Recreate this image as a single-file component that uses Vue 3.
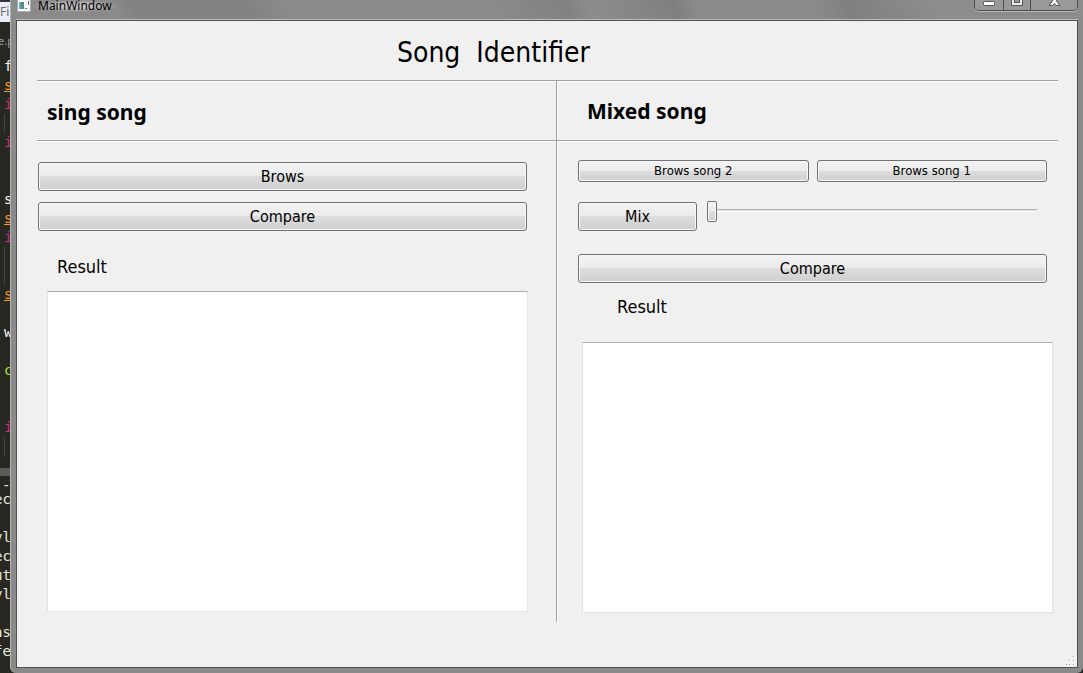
<script setup>
import { ref } from 'vue'

const topCode = [
  { t: 'f', c: 'white' }, { t: 's', c: 'orange' }, { t: 'i', c: 'pink' }, { t: '', c: 'guide' },
  { t: 'i', c: 'pink' }, { t: '' }, { t: '' }, { t: 's', c: 'white' },
  { t: 's', c: 'orange' }, { t: 'i', c: 'pink' }, { t: '', c: 'guide' }, { t: '', c: 'guide' },
  { t: 's', c: 'orange' }, { t: '' }, { t: 'w', c: 'white' }, { t: '' },
  { t: 'c', c: 'green' }, { t: '' }, { t: '' }, { t: 'i', c: 'pink' }, { t: '', c: 'guide' }
]
const bottomCode = ['ec', '', 'yl', 'ec', 'ut', 'yl', '', 'as', 'fe']

const heading = 'Song  Identifier'
const position = ref(0)
const leftResult = ref('')
const rightResult = ref('')
</script>

<template>
  <div class="screen">
    <aside class="editor">
      <div class="menu">Fi</div>
      <div class="tab">e.p</div>
      <div class="code">
        <div v-for="(l, n) in topCode" :key="n" class="line" :class="l.c">{{ l.t }}</div>
      </div>
      <div class="scroll"></div>
      <div class="console">
        <div class="line dash">-</div>
        <div v-for="(l, n) in bottomCode" :key="n" class="line">{{ l }}</div>
      </div>
    </aside>

    <div class="window">
      <header class="titlebar">
        <svg class="app-icon" width="14" height="12" viewBox="0 0 14 12">
          <rect x="0.5" y="-2" width="13" height="13.5" fill="#fafafa" stroke="#a9adb0" />
          <rect x="2" y="2" width="5" height="7" fill="#4f9185" />
          <rect x="2" y="2" width="2" height="7" fill="#71a5bb" />
          <rect x="8" y="8" width="2" height="1" fill="#777" />
          <rect x="11" y="1" width="1" height="4" fill="#60646c" />
        </svg>
        <span class="caption">MainWindow</span>
        <div class="controls">
          <button class="min" aria-label="Minimize">
            <svg width="14" height="8" viewBox="0 0 14 8"><rect x="1.5" y="1.5" width="11" height="4" rx="1" fill="#fff" stroke="#555" /></svg>
          </button>
          <button class="max" aria-label="Maximize">
            <svg width="14" height="8" viewBox="0 0 14 8"><path d="M1.5 -3V5.5H12.5V-3" fill="#eee" stroke="#555" /><rect x="4.5" y="-2" width="5" height="4.5" fill="#999" stroke="#555" /></svg>
          </button>
          <button class="close" aria-label="Close">
            <svg width="14" height="8" viewBox="0 0 14 8"><path d="M4 -3L5.5 1L2 5.5H5.5L7.5 3.5L9.5 5.5H13L9.5 1L11 -3Z" fill="#f5f5f5" stroke="#555" /></svg>
          </button>
        </div>
      </header>

      <main class="client">
        <h1>{{ heading }}</h1>
        <div class="panels">
          <section class="single">
            <h2>sing song</h2>
            <div class="single-body">
              <button class="btn">Brows</button>
              <button class="btn">Compare</button>
              <label for="result-single">Result</label>
              <textarea id="result-single" v-model="leftResult"></textarea>
            </div>
          </section>
          <section class="mixed">
            <h2>Mixed song</h2>
            <div class="mixed-body">
              <div class="pair">
                <button class="btn small">Brows song 2</button>
                <button class="btn small">Brows song 1</button>
              </div>
              <div class="mix-row">
                <button class="btn mix">Mix</button>
                <input v-model="position" type="range" min="0" max="99" aria-label="Mix position">
              </div>
              <button class="btn">Compare</button>
              <label for="result-mixed">Result</label>
              <textarea id="result-mixed" v-model="rightResult"></textarea>
            </div>
          </section>
        </div>
        <svg class="grip" width="10" height="10" viewBox="0 0 10 10">
          <path d="M7 0h2v2h-2zM7 4h2v2h-2zM7 8h2v2h-2zM3 4h2v2h-2zM3 8h2v2h-2zM-1 8h2v2h-2z" fill="#fff" />
          <path d="M7 0h1v1h-1zM7 4h1v1h-1zM7 8h1v1h-1zM3 4h1v1h-1zM3 8h1v1h-1zM0 8h1v1h-1z" fill="#999" />
        </svg>
      </main>
    </div>
  </div>
</template>

<style>
body { margin: 0; background: #272822; }
</style>

<style scoped>
* { box-sizing: border-box; }
.screen {
  display: flex;
  height: 100vh;
  overflow: hidden;
  background: #272822;
  color: #000;
  font-family: "DejaVu Sans Condensed", "Noto Sans", sans-serif;
}
.editor {
  width: 10px;
  flex: none;
  overflow: hidden;
  white-space: nowrap;
  font: 14px/19px "DejaVu Sans Mono", monospace;
  color: #e8e8e2;
}
.menu {
  height: 22px;
  background: #e9edf7;
  border-top: 2px solid #333;
  color: #666;
  font: 12px/20px "Noto Sans", sans-serif;
}
.tab {
  height: 35px;
  margin-left: -2px;
  color: #999;
  font: 11px/38px "Noto Sans", sans-serif;
}
.line { height: 19px; }
.code .line { padding-left: 4px; }
.white { color: #f8f8f2; }
.orange { color: #fd971f; text-decoration: underline; }
.pink { color: #c5307a; }
.green { color: #a6e22e; }
.guide { background: linear-gradient(#45463f, #45463f) 4px 0 / 1px 100% no-repeat; }
.scroll { height: 8px; margin-top: 12px; background: #5b5c58; }
.console { margin-top: 4px; }
.console .line { margin-left: -6px; }
.console .dash { height: 10px; line-height: 10px; margin-left: 2px; }

.window {
  flex: 1;
  min-width: 0;
  display: flex;
  flex-direction: column;
  padding: 0 5px 5px;
  border-left: 1px solid #b5b5b5;
  border-radius: 0 0 6px 6px;
  background:
    linear-gradient(65deg, transparent 10%, #828282 12%, #828282 22%, transparent 26%, transparent 45%, #828282 52%, #8c8c8c 54%, #808080 62%, transparent 64%, transparent 75%, #808080 78%, #8c8c8c 86%) 0 0 / 100% 19px no-repeat,
    #8a8a8a;
}
.titlebar {
  height: 20px;
  flex: none;
  display: flex;
  align-items: flex-start;
  border-bottom: 1px solid #bcbcbc;
}
.app-icon { margin-left: 1px; }
.caption {
  padding: 0 7px;
  font-family: "Noto Sans", sans-serif;
  font-size: 12px;
  line-height: 12px;
  background: radial-gradient(closest-side, #c4c4c4 30%, transparent);
}
.controls {
  display: flex;
  height: 11px;
  margin-left: auto;
  border: 1px solid #4c4c4c;
  border-top: 0;
  border-radius: 0 0 5px 5px;
  box-shadow: 0 1px 0 #bbb, inset 0 -1px 0 #aaa;
  overflow: hidden;
}
.controls button {
  display: flex;
  justify-content: center;
  padding: 0;
  border: 0;
  background: #999;
}
.controls .min, .controls .max { border-right: 1px solid #4c4c4c; }
.min { width: 29px; }
.max { width: 27px; }
.close { width: 46px; }

.client {
  position: relative;
  flex: 1;
  display: flex;
  flex-direction: column;
  padding: 0 19px 45px 20px;
  border: 1px solid #505050;
  background: #f0f0f0;
}
h1 {
  height: 59px;
  margin: 0;
  padding-left: 360px;
  font-size: 28px;
  font-weight: 400;
  line-height: 64px;
  white-space: pre;
}
.panels {
  flex: 1;
  display: grid;
  grid-template-columns: 520fr 501fr;
  border-top: 1px solid #a0a0a0;
  box-shadow: inset 0 1px 0 #fff;
}
section { display: flex; flex-direction: column; min-width: 0; }
.single { border-right: 1px solid #a0a0a0; }
.mixed { box-shadow: inset 1px 0 0 #fff; }
h2 {
  height: 60px;
  margin: 0;
  padding-left: 10px;
  border-bottom: 1px solid #a0a0a0;
  box-shadow: 0 1px 0 #fff;
  font-family: "Noto Sans", sans-serif;
  font-size: 21px;
  font-weight: 700;
  line-height: 62px;
}
.mixed h2 { padding-left: 30px; line-height: 60px; }
.single-body, .mixed-body { flex: 1; display: flex; flex-direction: column; }
.single-body { padding: 21px 28px 10px 1px; }
.mixed-body { padding: 19px 5px 9px 21px; }
.btn {
  height: 29px;
  flex: none;
  padding: 0;
  border: 1px solid #707070;
  border-radius: 3px;
  background: linear-gradient(#f2f2f2, #ebebeb 49%, #dddddd 50%, #cfcfcf);
  box-shadow: inset 0 0 0 1px #f8f8f8;
  color: #000;
  font-family: inherit;
  font-size: 16px;
  line-height: 28px;
}
.single-body .btn { margin-right: 1px; }
.single-body .btn + .btn { margin-top: 11px; }
.btn.small { flex: 1; height: 22px; font-size: 13px; line-height: 20px; }
.pair { display: flex; gap: 8px; margin-right: 6px; }
.mix-row { display: flex; align-items: flex-start; gap: 10px; margin: 20px 16px 23px 0; }
.mix { width: 119px; }
.mixed-body > .btn { margin-right: 6px; }
label { font-size: 18px; line-height: 24px; }
.single-body label { margin: 24px 0 12px 19px; }
.mixed-body label { margin: 12px 0 23px 39px; }
textarea {
  flex: 1;
  min-height: 0;
  margin: 0 0 0 9px;
  padding: 4px;
  border: 1px solid #e2e3ea;
  border-top-color: #abadb3;
  border-radius: 0;
  background: #fff;
  outline: 0;
  resize: none;
}
.mixed-body textarea { margin-left: 4px; }
input[type="range"] {
  flex: 1;
  min-width: 0;
  height: 19px;
  margin: 0;
  appearance: none;
  background: linear-gradient(#b0b0b0 0 1px, #e4e4e4 1px 2px, #fff 2px) 0 7px / 100% 3px no-repeat;
}
input[type="range"]::-webkit-slider-thumb {
  appearance: none;
  width: 10px;
  height: 21px;
  border: 1px solid #707070;
  border-radius: 2px;
  background: linear-gradient(#f2f2f2, #ebebeb 49%, #dddddd 50%, #cfcfcf);
  box-shadow: inset 0 0 0 1px #f8f8f8;
}
.grip { position: absolute; right: 1px; bottom: 1px; }
</style>
